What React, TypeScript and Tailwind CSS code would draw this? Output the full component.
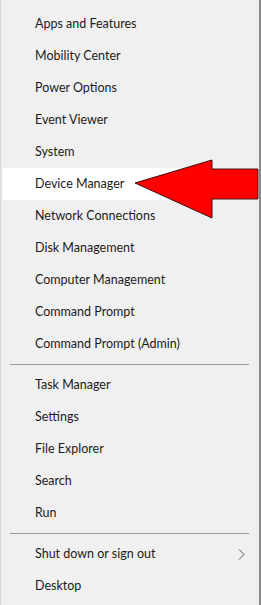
import React from "react";

const groupA = [
  "Apps and Features",
  "Mobility Center",
  "Power Options",
  "Event Viewer",
  "System",
  "Device Manager",
  "Network Connections",
  "Disk Management",
  "Computer Management",
  "Command Prompt",
  "Command Prompt (Admin)",
];

const groupB = ["Task Manager", "Settings", "File Explorer", "Search", "Run"];

const Item = ({ label, active, more }: { label: string; active?: boolean; more?: boolean }) => (
  <div
    className={`flex items-center h-[32px] ml-[2px] pl-[32px] pr-[14px] text-[12.5px] text-[#1b1b1b] ${
      active ? "bg-white" : ""
    }`}
  >
    <span className="flex-1">{label}</span>
    {more && (
      <svg width="7" height="11" viewBox="0 0 7 11">
        <path d="M1 0.5 L6 5.5 L1 10.5" fill="none" stroke="#555" strokeWidth="1" />
      </svg>
    )}
  </div>
);

const Divider = () => <div className="h-px bg-[#9a9a9a] ml-[9px] mr-[10px] my-[4px]" />;

export default function App() {
  return (
    <div
      className="relative w-[261px] h-[605px] overflow-hidden bg-[#f0f0f0] border-l border-[#d6d6d6] border-r-2 border-r-[#8a8a8a] pt-[8px]"
      style={{ fontFamily: 'Lato, "Noto Sans", sans-serif' }}
    >
      {groupA.map((l) => (
        <Item key={l} label={l} active={l === "Device Manager"} />
      ))}
      <Divider />
      {groupB.map((l) => (
        <Item key={l} label={l} />
      ))}
      <Divider />
      <Item label="Shut down or sign out" more />
      <Item label="Desktop" />

      <svg className="absolute left-0 top-0" width="259" height="605" viewBox="0 0 259 605">
        <polygon
          points="134,183 211,160 211,169 257,169 257,199 211,199 211,218"
          fill="#ff0000"
          stroke="#3a1010"
          strokeWidth="1"
        />
      </svg>
    </div>
  );
}
